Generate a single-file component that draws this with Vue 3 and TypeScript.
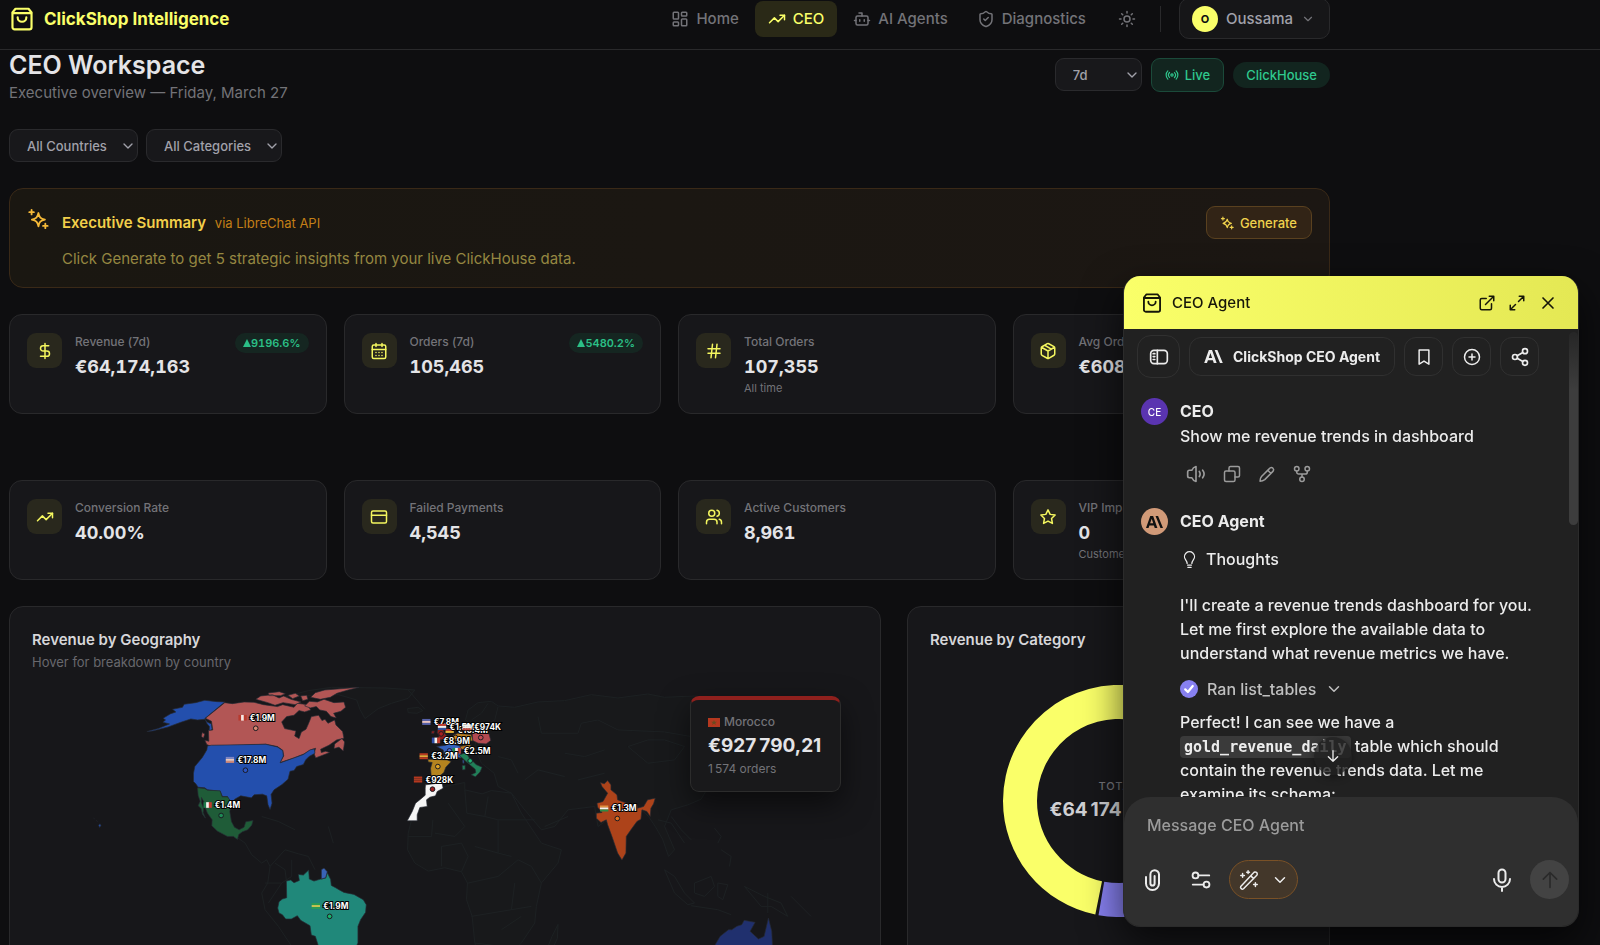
<script setup lang="ts">
import { h, ref } from 'vue'

const icons: Record<string, string> = {
  bag: '<path d="M6 2.5 3.2 6v13.5a2 2 0 0 0 2 2h13.6a2 2 0 0 0 2-2V6L18 2.5Z"/><path d="M3.5 6.5h17"/><path d="M16 10.5a4 4 0 0 1-8 0"/>',
  home: '<rect x="3" y="3" width="7" height="9" rx="1"/><rect x="14" y="3" width="7" height="5" rx="1"/><rect x="14" y="12" width="7" height="9" rx="1"/><rect x="3" y="16" width="7" height="5" rx="1"/>',
  trend: '<path d="M22 7 13.5 15.5l-5-5L2 17"/><path d="M16 7h6v6"/>',
  bot: '<path d="M12 8V4H8"/><rect x="4" y="8" width="16" height="12" rx="2"/><path d="M2 14h2M20 14h2M15 13v2M9 13v2"/>',
  shield: '<path d="M20 13c0 5-3.5 7.5-7.7 9a1 1 0 0 1-.6 0C7.500 20.500 4 18 4 13V6a1 1 0 0 1 1-1c2 0 4.500-1.200 6.200-2.700a1.200 1.200 0 0 1 1.600 0C14.500 3.800 17 5 19 5a1 1 0 0 1 1 1z"/><path d="m9 12 2 2 4-4"/>',
  sun: '<circle cx="12" cy="12" r="4"/><path d="M12 2v2M12 20v2M4.900 4.900l1.400 1.400M17.700 17.700l1.400 1.400M2 12h2M20 12h2M6.300 17.700l-1.400 1.400M19.100 4.900l-1.400 1.400"/>',
  down: '<path d="m6 9 6 6 6-6"/>',
  radio: '<path d="M4.900 19.100C1 15.200 1 8.800 4.900 4.900M7.800 16.200c-2.300-2.300-2.300-6.100 0-8.500M16.200 7.800c2.300 2.300 2.300 6.100 0 8.500M19.100 4.900C23 8.800 23 15.100 19.100 19"/><circle cx="12" cy="12" r="2"/>',
  sparkle: '<path d="M12.500 5.500c.8 4.600 2.300 6.200 7 7.200-4.700 1-6.200 2.500-7 7.300-1-4.800-2.500-6.300-7.200-7.300 4.700-1 6.200-2.600 7.200-7.200Z"/><path d="M5 2v5M2.500 4.500h5M20 17v5M17.500 19.500h5"/>',
  dollar: '<path d="M12 2v20M17 5H9.500a3.500 3.500 0 0 0 0 7h5a3.500 3.500 0 0 1 0 7H6"/>',
  calendar: '<path d="M8 2v4M16 2v4M3 10h18"/><rect x="3" y="4" width="18" height="18" rx="2"/><path d="M8 14h.01M12 14h.01M16 14h.01M8 18h.01M12 18h.01M16 18h.01"/>',
  hash: '<path d="M4 9h16M4 15h16M10 3 8 21M16 3l-2 18"/>',
  box: '<path d="M11 21.700a2 2 0 0 0 2 0l7-4a2 2 0 0 0 1-1.700V8a2 2 0 0 0-1-1.700l-7-4a2 2 0 0 0-2 0l-7 4A2 2 0 0 0 3 8v8a2 2 0 0 0 1 1.700zM12 22V12M3.300 7 12 12l8.700-5M7.500 4.300l9 5.100"/>',
  card: '<rect x="2" y="4" width="20" height="16" rx="2"/><path d="M2 9.500h20"/>',
  users: '<circle cx="9" cy="7" r="4"/><path d="M2 21v-2a4 4 0 0 1 4-4h6a4 4 0 0 1 4 4v2M22 21v-2a4 4 0 0 0-3-3.900M16 3.100a4 4 0 0 1 0 7.800"/>',
  star: '<path d="m12 2.500 2.900 6 6.600.9-4.800 4.600 1.200 6.600-5.900-3.200-5.900 3.200 1.200-6.600L2.500 9.400l6.600-.9Z"/>',
  external: '<path d="M15 3h6v6M10 14 21 3M18 13v6a2 2 0 0 1-2 2H5a2 2 0 0 1-2-2V8a2 2 0 0 1 2-2h6"/>',
  expand: '<path d="M15 3h6v6M21 3l-7 7M3 21l7-7M9 21H3v-6"/>',
  close: '<path d="M18 6 6 18M6 6l12 12"/>',
  sidebar: '<rect x="2" y="4" width="20" height="16" rx="4"/><path d="M10 4v16M5 8h2M5 11.500h2M5 15h2"/>',
  bookmark: '<path d="m18.500 21.500-6.500-4-6.500 4v-19h13z"/>',
  plus: '<circle cx="12" cy="12" r="10"/><path d="M8 12h8M12 8v8"/>',
  share: '<circle cx="18" cy="5" r="3"/><circle cx="6" cy="12" r="3"/><circle cx="18" cy="19" r="3"/><path d="m8.600 13.500 6.800 4M15.400 6.500l-6.800 4"/>',
  speaker: '<path d="M12 3v18c-2.500-.6-4-2.200-5-4.500H4a2 2 0 0 1-2-2v-5a2 2 0 0 1 2-2h3C8 5.200 9.500 3.600 12 3ZM16 9c1.300 2 1.300 4 0 6M20 7.500c2.300 3 2.300 6 0 9"/>',
  copy: '<rect x="2" y="8" width="14" height="14" rx="2"/><path d="M8 8V4a2 2 0 0 1 2-2h10a2 2 0 0 1 2 2v10a2 2 0 0 1-2 2h-4"/>',
  pencil: '<path d="M13.500 6.500 16 4a3 3 0 0 1 4.200 4.200L9 19.500C7 21 5 21.500 2.700 21.500 2.700 19 3.300 17 4.700 15.300ZM13 7l4 4"/>',
  fork: '<circle cx="12" cy="19" r="3"/><circle cx="5" cy="5" r="3"/><circle cx="19" cy="5" r="3"/><path d="M5 8v1.500a2.500 2.500 0 0 0 2.500 2.500h9A2.500 2.500 0 0 0 19 9.500V8M12 12v4"/>',
  bulb: '<path d="M9 17c0-2-1-3.300-2-4.700a6.300 6.300 0 1 1 10 0c-1 1.400-2 2.700-2 4.700M9.500 19h5M10 22h4"/>',
  arrowDown: '<path d="M12 4v16M5 13l7 7 7-7"/>',
  arrowUp: '<path d="M12 21V3M4 11l8-8 8 8"/>',
  clip: '<path d="M5 9v6.500a6.500 6.500 0 0 0 13 0V6.500a4.300 4.300 0 0 0-8.600 0v9a2.100 2.100 0 0 0 4.200 0V8"/>',
  sliders: '<circle cx="6" cy="7" r="3.200"/><path d="M9.200 7H21M3 17h11.800"/><circle cx="18" cy="17" r="3.200"/>',
  wand: '<path d="m3 19 14-15a2 2 0 0 1 3.500 2.800L6 21.500a2 2 0 0 1-3-2.500ZM14 7.500l3 3M5 5v4M3 7h4M11 2v3M9.500 3.500h3M19 15v4M17 17h4"/>',
  mic: '<rect x="8.500" y="1.500" width="7" height="13" rx="3.500"/><path d="M4 11a8 8 0 0 0 16 0M12 19v4"/>',
  check: '<path d="m7 12.500 3.500 3.500L17 8"/>',
}

const Icon = (props: { name: string; size?: number; stroke?: number }) =>
  h('svg', {
    width: props.size ?? 16,
    height: props.size ?? 16,
    viewBox: '0 0 24 24',
    fill: 'none',
    stroke: 'currentColor',
    'stroke-width': props.stroke ?? 2,
    'stroke-linecap': 'round',
    'stroke-linejoin': 'round',
    'aria-hidden': 'true',
    innerHTML: icons[props.name],
  })
Icon.props = ['name', 'size', 'stroke']

interface Kpi { icon: string; label: string; value: string; sub?: string; delta?: string }
const kpiRows: Kpi[][] = [
  [
    { icon: 'dollar', label: 'Revenue (7d)', value: '€64,174,163', delta: '9196.6%' },
    { icon: 'calendar', label: 'Orders (7d)', value: '105,465', delta: '5480.2%' },
    { icon: 'hash', label: 'Total Orders', value: '107,355', sub: 'All time' },
    { icon: 'box', label: 'Avg Order Value', value: '€608.49' },
  ],
  [
    { icon: 'trend', label: 'Conversion Rate', value: '40.00%' },
    { icon: 'card', label: 'Failed Payments', value: '4,545' },
    { icon: 'users', label: 'Active Customers', value: '8,961' },
    { icon: 'star', label: 'VIP Impacted', value: '0', sub: 'Customers' },
  ],
]

const nav = [
  { icon: 'home', label: 'Home' },
  { icon: 'trend', label: 'CEO', active: true },
  { icon: 'bot', label: 'AI Agents' },
  { icon: 'shield', label: 'Diagnostics' },
]

interface Marker { x: number; y: number; value: string; dir: 'v' | 'h'; flag: string[]; dot?: [number, number]; color?: string }
const markers: Marker[] = [
  { x: 1277, y: 189, value: '€10.4M', dir: 'h', flag: ['#20201c', '#c23d30', '#e2b43a'], dot: [1272, 203], color: '#d98a20' },
  { x: 654, y: 153, value: '€1.9M', dir: 'v', flag: ['#b83a2e', '#f4e8e4', '#b83a2e'], dot: [672, 175], color: '#d98a72' },
  { x: 617, y: 279, value: '€17.8M', dir: 'h', flag: ['#7c86c4', '#eac9bd', '#d08a78'], dot: [641, 301], color: '#2b55c4' },
  { x: 549, y: 415, value: '€1.4M', dir: 'v', flag: ['#1d7a4a', '#f2f2ee', '#c23d30'], dot: [568, 437], color: '#1e8a55' },
  { x: 875, y: 718, value: '€1.9M', dir: 'h', flag: ['#2b9a55', '#c9c352', '#2b9a55'], dot: [894, 740], color: '#18b36a' },
  { x: 1207, y: 165, value: '€7.8M', dir: 'h', flag: ['#5560a8', '#e8c4c4', '#5560a8'], dot: [1229, 192], color: '#a82020' },
  { x: 1254, y: 180, value: '€1.5M', dir: 'h', flag: ['#c23d30', '#f2f2ee', '#33509c'] },
  { x: 1328, y: 181, value: '€974K', dir: 'h', flag: ['#f2f2ee', '#f2f2ee', '#c24a40'], dot: [1348, 203], color: '#c24a52' },
  { x: 1235, y: 221, value: '€8.9M', dir: 'v', flag: ['#2f4ea8', '#f2f2ee', '#c23d30'], dot: [1254, 243], color: '#4f6fe0' },
  { x: 1297, y: 252, value: '€2.5M', dir: 'v', flag: ['#1d8a4a', '#f2f2ee', '#c23d30'], dot: [1316, 273], color: '#1eb374' },
  { x: 1199, y: 268, value: '€3.2M', dir: 'h', flag: ['#b83a20', '#e2a93a', '#b83a20'], dot: [1219, 290], color: '#e0a526' },
  { x: 1182, y: 338, value: '€928K', dir: 'h', flag: ['#b5381f', '#a83a24', '#b5381f'], dot: [1203, 358], color: '#a02020' },
  { x: 1741, y: 425, value: '€1.3M', dir: 'h', flag: ['#e09040', '#f2f2ee', '#2b8a45'], dot: [1758, 446], color: '#e07020' },
]

const range = ref('7d')
const country = ref('All Countries')
const category = ref('All Categories')
const draft = ref('')
</script>

<template>
  <div class="app">
    <header class="topbar">
      <div class="wrap topbar-row">
        <a href="#" class="brand"><Icon name="bag" :size="26" /><span>ClickShop Intelligence</span></a>
        <nav class="nav">
          <a v-for="n in nav" :key="n.label" href="#" class="nav-link" :class="{ active: n.active }">
            <Icon :name="n.icon" :size="18" /><span>{{ n.label }}</span>
          </a>
          <button class="theme" aria-label="Toggle theme"><Icon name="sun" :size="18" /></button>
          <span class="divider"></span>
          <button class="user"><span class="user-avatar">O</span><span>Oussama</span><Icon name="down" :size="14" /></button>
        </nav>
      </div>
    </header>

    <main class="wrap main">
      <section class="page-head">
        <div>
          <h1>CEO Workspace</h1>
          <p class="page-sub">Executive overview — Friday, March 27</p>
        </div>
        <div class="head-tools">
          <label class="select range">
            <select v-model="range" aria-label="Period"><option>7d</option><option>30d</option></select>
            <Icon name="down" :size="16" />
          </label>
          <button class="live"><Icon name="radio" :size="14" /><span>Live</span></button>
          <span class="source">ClickHouse</span>
        </div>
      </section>

      <section class="filters">
        <label class="select countries">
          <select v-model="country" aria-label="Country"><option>All Countries</option></select>
          <Icon name="down" :size="16" />
        </label>
        <label class="select categories">
          <select v-model="category" aria-label="Category"><option>All Categories</option></select>
          <Icon name="down" :size="16" />
        </label>
      </section>

      <section class="summary">
        <Icon class="summary-icon" name="sparkle" :size="22" />
        <div class="summary-text">
          <h2>Executive Summary <small>via LibreChat API</small></h2>
          <p>Click Generate to get 5 strategic insights from your live ClickHouse data.</p>
        </div>
        <button class="generate"><Icon name="sparkle" :size="14" /><span>Generate</span></button>
      </section>

      <section v-for="(row, i) in kpiRows" :key="i" class="kpis">
        <article v-for="k in row" :key="k.label" class="kpi">
          <span class="kpi-icon"><Icon :name="k.icon" :size="18" /></span>
          <div class="kpi-text">
            <div class="kpi-label">{{ k.label }}</div>
            <div class="kpi-value">{{ k.value }}</div>
            <div v-if="k.sub" class="kpi-sub">{{ k.sub }}</div>
          </div>
          <span v-if="k.delta" class="delta"><svg width="8" height="8" viewBox="0 0 8 8"><path d="M4 0 8 8H0Z" fill="currentColor" /></svg>{{ k.delta }}</span>
        </article>
      </section>

      <section class="panels">
        <article class="panel geo">
          <h3>Revenue by Geography</h3>
          <p class="panel-sub">Hover for breakdown by country</p>
          <div class="map">
            <svg class="map-svg" viewBox="0 9 2481 900" role="img" aria-label="Revenue by country">
              <g fill="#18191b" stroke="#1d2123" stroke-width="3" stroke-linejoin="round">
                <path d="M760 80 830 62 900 52 1060 54 1150 60 1130 85 1080 100 1040 116 1000 146 985 118 975 90 920 74Z" />
                <path d="M1128 116 1160 112 1174 122 1156 130 1130 128Z" />
                <path d="M1302 150 1310 120 1340 98 1380 94 1400 108 1450 112 1520 96 1600 92 1680 74 1760 84 1850 72 1900 82 1990 78 2100 92 2250 104 2340 118 2320 134 2270 142 2220 170 2190 196 2200 160 2140 150 2080 172 2050 214 2024 246 2010 300 2032 350 2010 388 1970 405 1920 420 1900 470 1930 540 1912 560 1894 508 1872 470 1852 440 1830 420 1790 408 1700 470 1690 410 1610 420 1570 470 1530 480 1480 420 1440 370 1400 350 1388 310 1350 280 1330 232 1340 180Z" />
                <path d="M1180 380 1240 350 1300 338 1300 360 1352 372 1380 362 1440 370 1470 430 1530 520 1590 540 1580 580 1530 640 1515 710 1510 760 1470 820 1420 870 1350 880 1330 820 1322 740 1305 690 1308 640 1290 606 1240 594 1190 604 1150 580 1128 540 1130 490 1140 450Z" />
                <path d="M1562 800 1580 764 1578 806 1560 846 1546 840Z" />
                <path fill="none" d="M1300 360 1306 430 1360 440 1400 450 1400 550 1440 560M1204 450 1200 500 1130 500M1250 400 1300 470 1270 500 1210 490M1360 440 1370 380M1400 450H1510M1230 590V530L1290 520 1310 560 1290 606M1310 640 1400 620 1460 570 1500 590 1530 640M1450 640 1440 720 1320 740M1440 720 1500 710M1410 780 1470 740M1330 820 1410 830 1420 870M1330 530 1400 550M1520 140 1530 190 1640 190 1650 160 1700 150 1760 180 1900 186 1980 200M1600 250 1660 260 1720 240M1640 330 1720 310M1480 330 1520 300 1600 320M1540 470 1610 440M1790 230 1850 280 1930 270 1960 230 1900 210 1850 210 1790 230" />
                <path fill="none" d="M612 500 640 520 660 555 690 580 705 570 715 590 708 640 690 670 700 720 740 770 780 830M715 590 760 540 800 552 830 560 850 600M690 440 740 455 790 480M750 640 780 620 780 570M700 640 750 640 710 700M890 470 905 520M730 580 760 600 765 640" />
                <path fill="none" d="M1900 600 1930 620 1960 670 1990 700 1970 705 1930 670ZM1980 708 2060 720 2100 735M1990 640 2040 620 2050 650 2020 680 1990 670ZM2060 640 2090 645 2075 690 2060 680ZM2050 475 2070 500 2060 520M2070 540 2100 560 2095 590M2140 650 2200 680 2250 700 2270 740 2220 710 2190 710ZM2210 670V730M2280 680 2340 740" />
                <path fill="none" d="M1180 118 1130 60M1320 150 1350 130 1370 100M1400 110 1390 150 1350 170M1400 260 1440 270 1460 310M1880 450 1920 460 1960 520M1920 440 1950 480 1980 510" />
              </g>
              <g stroke="#252a33" stroke-width="2" stroke-linejoin="round">
                <g transform="translate(147 0)">
                  <path fill="#234fad" d="M432 96 408 95 372 91 345 98 310 103 305 112 275 118 285 126 268 132 247 145 254 150 246 157 266 162 232 176 198 185 215 183 262 171 300 157 330 147 350 150 372 148 380 157 392 162 394 178 385 184 386 170 378 160 372 146Z" />
                  <path fill="#b25655" d="M432 98 374 145 392 154 396 180 383 182 384 214 372 211 378 224 390 229 555 223 590 230 606 241 609 258 598 278 640 264 670 252 690 240 705 235 700 250 705 264 747 248 735 244 722 248 720 238 745 226 768 210 790 205 786 185 766 165 762 150 742 160 733 148 724 152 714 136 692 140 684 160 676 178 662 186 655 206 642 198 646 183 612 176 603 156 618 140 640 136 655 122 672 126 690 120 680 104 650 100 640 112 606 104 590 110 548 104 520 97 490 96 455 101Z" />
                  <path fill="#b25655" d="m762 222 22-16 8 10-4 27-13-11-15 4ZM672 108l14-14 24 2 20-8 30 10 30-2 5 16-14 12-22 6 8 14-16-4-14-16-20-4-10-10-18 4ZM690 82l14-14 28-8 103-8-32 8-34 10-20 12-30 6ZM525 88l15-10 35-4 20 10 14-6 22 10 30 8-18 8-36-6-24 8-22-8ZM562 69l34-4 18 6-14 6-34 0ZM622 76l22-6 12 8-20 8ZM660 78l18-2 4 12-16 4ZM364 188l8 4-4 12-6-4Z" />
                  <path fill="#234fad" d="M392 226 555 223 590 231 606 242 608 258 598 279 640 264 668 254 688 240 701 237 703 250 685 260 675 270 668 284 648 290 640 302 628 304 622 328 604 344 580 360 571 374 574 400 568 419 562 405 558 378 545 373 520 375 512 384 480 378 462 388 455 396 445 390 440 380 425 380 418 364 380 360 372 354 352 352 345 342 338 335 338 310 342 290 365 262 378 240 380 228ZM53 466l4-4 3 5-4 6ZM38 445l3 2M46 452l4 3" />
                  <path fill="#1f5c38" d="m350 354 22 2 8 5 38 2 6 18 16 0 11 14-1 15-3 15 5 30 9 17 14 8 15-8 5-16 22-4-4 14-12 14-16 6-11 8-4 15-12-9-18 0-30-16-17-16 1-18-14-20-6-15-4-18-8-14 0 16 6 16-1 14 7 16-9-12-4-17-9-8 6-14-6-17Z" />
                  <path fill="#20887a" d="M617 634 630 631 640 639 656 632 653 614 668 616 684 601 686 628 700 634 720 628 735 625 740 609 750 629 752 647 765 654 775 660 790 668 820 674 848 690 857 705 855 728 840 750 832 770 832 820 812 860 742 900 712 860 712 825 704 800 692 796 688 768 660 752 650 738 632 748 615 748 605 735 595 730 591 715 595 696 605 688 618 684Z" />
                  <path fill="#3963b8" d="m722 600 8-5 10 11-5 18-13 4Z" />
                </g>
                <g transform="translate(1047 0)">
                  <path fill="#f5f5f5" d="m135 345 30-4 20-1 3 15-18 10-5 13-17 4-10 8 2 20-22 3-8 22 0 18-30 0 15-28 10-25 15-12 14-12 0-21Z" />
                  <path fill="#b5841f" d="m142 268 58 2 12 5-16 17-6 16-12 10-26 0-2-23 5-17-12-2Z" />
                  <path fill="#3562bd" d="m168 230 28-4 12-6 36 10-4 18 2 16-16-2-14 8-20-6-4-24ZM246 270l4 0 1 10-4 0Z" />
                  <path fill="#8f1d1d" d="m172 178 16 0 4 12 10 12-10 7-24 1 8-12-6-10ZM154 183l8 0-2 8-7 0Z" />
                  <path fill="#b87c20" d="m218 196 14-6 40 4 6 18-24 6-30-3ZM238 230l34-7-4 12-24 4Z" />
                  <path fill="#b24a50" d="m275 190 30-4 21 6 5 20-14 10-24-2-16-8Z" />
                  <path fill="#218058" d="m235 256 22-8 8 14 22 22 18 8-6 14-14 15-13-6 14-7-2-10-24-20-14-13ZM245 287l9-1 0 13-8 1Z" />
                  <path fill="#ad431a" d="m660 338 12 4 10-10 10 13 0 15 18 15 2 15 28 10 30 5 2 10 18-5 12-20 23-5-5 17-8 13-2 25-10-15-15-5-3 28-12 7-18 25-14 20-1 50-12 21-13-21-17-50-13-35-4-15-16 8-14-13 0-15 17-2-13-16-2-12 18-5 14-25-17-20Z" />
                </g>
                <path fill="#20306e" d="m2052 825 15-25 25-20 10 0 15-10 15-5 7-13 33 6-15 27 25 23 17-8 13-55 10 40 2 40 20 50-10 60H2040Z" />
              </g>
              <g class="markers">
                <g v-for="m in markers" :key="m.x + '-' + m.y">
                  <circle v-if="m.dot" :cx="m.dot[0]" :cy="m.dot[1]" r="7" :fill="m.color" stroke="#1b1b22" stroke-width="3" />
                  <g v-for="(c, j) in m.flag" :key="j">
                    <rect v-if="m.dir === 'v'" :x="m.x - 34 + j * 8" :y="m.y - 18" width="9" height="17" :fill="c" />
                    <rect v-else :x="m.x - 35" :y="m.y - 18 + j * 6" width="25" height="6" :fill="c" />
                  </g>
                  <text :x="m.x" :y="m.y">{{ m.value }}</text>
                </g>
              </g>
            </svg>
            <div class="tip">
              <div class="tip-name">
                <svg width="12" height="9" viewBox="0 0 12 9"><rect width="12" height="9" fill="#b5381f" /><path d="m6 2 .8 1.800H9L7.200 5 8 7 6 5.800 4 7l.8-2L3 3.800h2.200Z" fill="#6b4a20" /></svg>
                Morocco
              </div>
              <div class="tip-value">€927&#8239;790,21</div>
              <div class="tip-sub">1&#8239;574 orders</div>
            </div>
          </div>
        </article>

        <article class="panel">
          <h3>Revenue by Category</h3>
          <div class="donut">
            <svg width="232" height="232" viewBox="-116 -116 232 232" role="img" aria-label="Revenue by category">
              <path fill="#faff69" d="M20-114.300A116 116 0 0 0-116 0A116 116 0 0 0-23.700 113.600L-17 80.200A82 82 0 0 1-82 0A82 82 0 0 1 14-80.800Z" />
              <path fill="#8780f0" d="M-20.500 114.200A116 116 0 0 0 88 75.600L62.200 53.500A82 82 0 0 1-14.800 80.700Z" />
              <path fill="#34d399" d="M90 73.200A116 116 0 0 0 23.500-113.600L17.500-80.100A82 82 0 0 1 63.800 51.500Z" />
            </svg>
            <div class="donut-label"><span>TOTAL</span><strong>€64&#8239;174&#8239;163,02</strong></div>
          </div>
        </article>
      </section>
    </main>

    <aside class="chat">
      <header class="chat-head">
        <Icon name="bag" :size="22" /><span class="chat-title">CEO Agent</span>
        <button aria-label="Open in new tab"><Icon name="external" :size="18" /></button>
        <button aria-label="Expand"><Icon name="expand" :size="18" /></button>
        <button aria-label="Close"><Icon name="close" :size="20" /></button>
      </header>

      <div class="chat-body">
        <div class="chat-tools">
          <button class="tool big" aria-label="Toggle sidebar"><Icon name="sidebar" :size="20" /></button>
          <button class="tool model">
            <svg width="19" height="13" viewBox="0 0 20 14" fill="currentColor"><path fill-rule="evenodd" d="M5 0h3.400l5 14h-3.100l-1-2.900H4L3 14H0ZM6.700 3.300 4.900 8.600h3.600ZM11.200 0h3L20 14h-3Z" /></svg>
            <span>ClickShop CEO Agent</span>
          </button>
          <button class="tool" aria-label="Bookmark"><Icon name="bookmark" :size="18" /></button>
          <button class="tool" aria-label="New chat"><Icon name="plus" :size="18" /></button>
          <button class="tool" aria-label="Share"><Icon name="share" :size="20" /></button>
        </div>

        <div class="message">
          <span class="avatar ceo">CE</span>
          <div class="message-text">
            <h4>CEO</h4>
            <p>Show me revenue trends in dashboard</p>
            <div class="actions">
              <button aria-label="Read aloud"><Icon name="speaker" :size="20" /></button>
              <button aria-label="Copy"><Icon name="copy" :size="18" /></button>
              <button aria-label="Edit"><Icon name="pencil" :size="18" /></button>
              <button aria-label="Fork"><Icon name="fork" :size="18" /></button>
            </div>
          </div>
        </div>

        <div class="message agent-message">
          <span class="avatar agent"><svg width="17" height="12" viewBox="0 0 20 14" fill="currentColor"><path fill-rule="evenodd" d="M5 0h3.400l5 14h-3.100l-1-2.900H4L3 14H0ZM6.700 3.300 4.900 8.600h3.600ZM11.200 0h3L20 14h-3Z" /></svg></span>
          <div class="message-text">
            <h4>CEO Agent</h4>
            <button class="thoughts"><Icon name="bulb" :size="19" :stroke="1.6" /><span>Thoughts</span></button>
            <p class="para">I'll create a revenue trends dashboard for you. Let me first explore the available data to understand what revenue metrics we have.</p>
            <button class="ran"><span class="done"><Icon name="check" :size="18" :stroke="3" /></span><span>Ran list_tables</span><Icon name="down" :size="18" /></button>
            <p class="after">Perfect! I can see we have a <code>gold_revenue_daily</code> table which should contain the revenue trends data. Let me examine its schema:</p>
          </div>
        </div>
        <span class="thumb"></span>
        <button class="to-bottom" aria-label="Scroll to bottom"><Icon name="arrowDown" :size="16" /></button>
      </div>

      <form class="composer" @submit.prevent>
        <input v-model="draft" type="text" aria-label="Message CEO Agent" placeholder="Message CEO Agent" />
        <div class="composer-row">
          <button type="button" class="plain" aria-label="Attach"><Icon name="clip" :size="24" /></button>
          <button type="button" class="plain" aria-label="Tools"><Icon name="sliders" :size="22" /></button>
          <button type="button" class="wand" aria-label="Artifacts"><Icon name="wand" :size="22" :stroke="1.6" /><Icon name="down" :size="18" /></button>
          <button type="button" class="plain mic" aria-label="Dictate"><Icon name="mic" :size="24" /></button>
          <button type="submit" class="send" aria-label="Send"><Icon name="arrowUp" :size="20" /></button>
        </div>
      </form>
    </aside>
  </div>
</template>

<style>
body { margin: 0; background: #0e0e10; }
</style>

<style scoped>
* { box-sizing: border-box; }
.app {
  height: 100vh;
  overflow: hidden;
  background: #0e0e10;
  color: #e4e4e7;
  font-family: Inter, "Liberation Sans", sans-serif;
  font-size: 15px;
}
h1, h2, h3, h4, p { margin: 0; }
svg { display: block; flex: none; }
button { padding: 0; border: 0; background: none; color: inherit; font: inherit; cursor: pointer; display: flex; align-items: center; }
a { color: inherit; text-decoration: none; }
.wrap { max-width: 1321px; margin: 0 9px; }

.topbar { height: 50px; border-bottom: 1px solid #29292b; }
.topbar-row { height: 37px; display: flex; align-items: center; justify-content: space-between; }
.brand { display: flex; align-items: center; gap: 9px; color: #faff69; font-size: 17px; font-weight: 700; }
.nav { display: flex; align-items: center; color: #737378; font-weight: 500; }
.nav-link { display: flex; align-items: center; gap: 7px; height: 36px; padding: 0 13px; margin-right: 3px; border-radius: 8px; }
.nav-link.active { background: #2a2917; color: #faff69; }
.theme { padding: 0 16px; }
.divider { width: 1px; height: 26px; margin: 0 18px 0 8px; background: #29292b; }
.user { height: 41px; padding: 0 14px 0 12px; gap: 8px; border: 1px solid #29292b; border-radius: 10px; background: #161618; color: #a1a1aa; font-weight: 500; }
.user-avatar { width: 26px; height: 26px; border-radius: 50%; background: #faff69; color: #0e0e10; font-size: 11px; font-weight: 700; display: flex; align-items: center; justify-content: center; }
.user svg { color: #737378; }

.page-head { display: flex; justify-content: space-between; }
h1 { font-size: 25px; line-height: 30px; font-weight: 600; }
.page-sub { line-height: 26px; color: #737378; }
.head-tools { display: flex; align-items: center; gap: 9px; height: 49px; }
.select { position: relative; display: block; }
.select select { appearance: none; width: 100%; height: 33px; padding: 0 17px; border: 1px solid #2a2a2d; border-radius: 9px; background: #18181b; color: #a1a1aa; font: 500 13px Inter, sans-serif; }
.select svg { position: absolute; right: 2px; top: 9px; color: #a1a1aa; pointer-events: none; }
.range { width: 87px; }
.countries { width: 129px; }
.categories { width: 136px; }
.live { height: 34px; gap: 6px; padding: 0 13px; border: 1px solid #1b4a3a; border-radius: 9px; background: #12251f; color: #2fc98e; font-size: 13px; font-weight: 500; }
.source { height: 26px; line-height: 26px; padding: 0 13px; border-radius: 13px; background: #12251f; color: #2fc98e; font-size: 13px; font-weight: 500; }
.filters { display: flex; gap: 8px; margin: 23px 0 26px; }

.summary { display: flex; align-items: flex-start; min-height: 100px; padding: 17px 17px 16px; border: 1px solid #3a2917; border-radius: 14px; background: linear-gradient(90deg, #1a1711, #1c1713); }
.summary-icon { color: #f5b938; margin-top: 2px; }
.summary-text { flex: 1; margin-left: 13px; }
h2 { font-size: 15px; line-height: 34px; font-weight: 600; color: #f2cf4a; }
h2 small { margin-left: 5px; font-size: 13px; font-weight: 400; color: #c47f16; }
.summary-text p { line-height: 24px; margin-top: 7px; color: #958741; }
.generate { height: 33px; padding: 0 14px 0 13px; gap: 6px; border: 1px solid #5a411f; border-radius: 9px; background: #322416; color: #f0d24c; font-size: 13px; font-weight: 500; }

.kpis { display: grid; grid-template-columns: repeat(4, 1fr); gap: 17px; margin-top: 26px; }
.kpis + .kpis { margin-top: 66px; }
.kpi { display: flex; align-items: flex-start; min-height: 100px; padding: 18px 17px 0; border: 1px solid #29292b; border-radius: 13px; background: #17171a; }
.kpi-icon { width: 35px; height: 35px; border-radius: 9px; background: #29281d; color: #f4f65f; display: flex; align-items: center; justify-content: center; }
.kpi-text { flex: 1; margin-left: 13px; }
.kpi-label { font-size: 12px; line-height: 18px; font-weight: 500; color: #737378; }
.kpi-value { font-size: 18px; line-height: 31px; font-weight: 700; font-variant-numeric: tabular-nums; }
.kpi-sub { font-size: 11px; line-height: 12px; color: #737378; }
.delta { height: 20px; display: flex; align-items: center; padding: 0 8px; border-radius: 10px; background: #152621; color: #2bbf86; font-size: 11px; font-weight: 600; font-variant-numeric: tabular-nums; }

.panels { display: grid; grid-template-columns: repeat(3, 1fr); gap: 26px; margin-top: 26px; }
.panel { min-height: 420px; padding: 22px; border: 1px solid #29292b; border-radius: 14px; background: #17171a; overflow: hidden; }
.geo { grid-column: span 2; }
h3 { font-size: 15px; line-height: 22px; font-weight: 600; color: #d6d6d9; }
.panel-sub { font-size: 13px; line-height: 22px; color: #68686d; }
.map { position: relative; }
.map-svg { width: 100%; height: auto; }
.markers text { font-size: 25px; font-weight: 700; fill: #fff; stroke: #000; stroke-width: 6px; paint-order: stroke; }
.tip { position: absolute; right: 17px; top: 23px; width: 151px; padding: 13px 17px; border: 1px solid #2c2c2c; border-top: 4px solid #8f201d; border-radius: 9px; background: #19191b; box-shadow: 0 12px 30px #0008; }
.tip-name { display: flex; align-items: center; gap: 4px; font-size: 12px; line-height: 18px; font-weight: 500; color: #737378; }
.tip-value { font-size: 19px; line-height: 29px; font-weight: 700; }
.tip-sub { font-size: 12px; line-height: 18px; color: #737378; }
.donut { position: relative; width: 232px; margin: 34px auto 0; }
.donut-label { position: absolute; inset: 0; display: flex; flex-direction: column; align-items: center; justify-content: center; padding-bottom: 3px; }
.donut-label span { font-size: 11px; line-height: 20px; font-weight: 500; color: #737378; letter-spacing: 1px; }
.donut-label strong { font-size: 19px; line-height: 28px; color: #d0d0d3; }

.chat { position: fixed; right: 21px; bottom: 18px; width: 456px; height: 651px; display: flex; flex-direction: column; border: 1px solid #2b2b2b; border-top: 0; border-radius: 17px; overflow: hidden; background: #212121; color: #ececec; font-size: 16px; font-weight: 500; box-shadow: 0 16px 40px #000a; }
.chat-head { height: 53px; flex: none; display: flex; align-items: center; gap: 12px; padding: 0 20px 0 17px; background: linear-gradient(90deg, #faff69, #e4e854); color: #161609; }
.chat-title { flex: 1; margin-left: -3px; font-size: 15px; }
.chat-body { position: relative; flex: 1; overflow: hidden; padding: 6px 13px 0; }
.chat-tools { display: flex; align-items: center; gap: 9px; }
.tool { width: 39px; height: 39px; justify-content: center; border: 1px solid #303030; border-radius: 12px; }
.tool.big { width: 43px; height: 43px; border-radius: 14px; }
.tool.model { width: auto; gap: 10px; padding: 0 14px; font-size: 14px; font-weight: 700; }
.message { display: flex; margin-top: 21px; padding-right: 17px; }
.avatar { width: 27px; height: 27px; flex: none; margin: -1px 12px 0 4px; border-radius: 50%; display: flex; align-items: center; justify-content: center; }
.avatar.ceo { background: #5a34b0; color: #fff; font-size: 10px; }
.avatar.agent { background: #d19a78; color: #111; }
h4 { font-size: 16px; line-height: 24px; font-weight: 700; }
.message p { line-height: 24px; }
.message p:first-of-type { margin-top: 1px; }
.actions { display: flex; gap: 17px; margin-top: 16px; height: 20px; padding-left: 6px; color: #9b9b9b; }
.agent-message { margin-top: 25px; }
.thoughts { gap: 7px; margin-top: 14px; height: 24px; }
.message p.para { margin-top: 22px; }
.ran { gap: 9px; height: 24px; margin-top: 12px; color: #c0c0c0; }
.done { width: 18px; height: 18px; border-radius: 50%; background: #8780f0; color: #fff; }
.message .after { margin-top: 9px; }
code { padding: 2px 4px; border-radius: 4px; background: #3a3a3a; font: 700 15px "DejaVu Sans Mono", monospace; }
.thumb { position: absolute; right: 0; top: 3px; width: 9px; height: 193px; border-radius: 5px; background: linear-gradient(#262626, #3d3d3d 30%); }
.to-bottom { position: absolute; left: 46%; bottom: 22px; width: 38px; height: 38px; margin-left: -19px; justify-content: center; border-radius: 50%; background: #212121cc; box-shadow: 0 2px 8px #0006; }
.composer { height: 129px; flex: none; padding: 16px 9px 0; border-radius: 26px 26px 0 0; background: #2f2f2f; }
.composer input { display: block; width: 100%; height: 24px; padding: 0 14px; border: 0; outline: 0; background: none; color: #ececec; font: 500 16px Inter, sans-serif; }
.composer input::placeholder { color: #9b9b9b; opacity: 1; }
.composer-row { display: flex; align-items: center; margin-top: 23px; height: 39px; }
.plain { width: 39px; height: 39px; justify-content: center; margin-right: 9px; }
.wand { width: 69px; height: 39px; justify-content: center; gap: 11px; border: 1px solid #7a5126; border-radius: 20px; background: #43372a; }
.mic { margin-left: auto; }
.send { width: 39px; height: 39px; justify-content: center; border-radius: 50%; background: #434343; color: #2a2a2a; }
</style>
